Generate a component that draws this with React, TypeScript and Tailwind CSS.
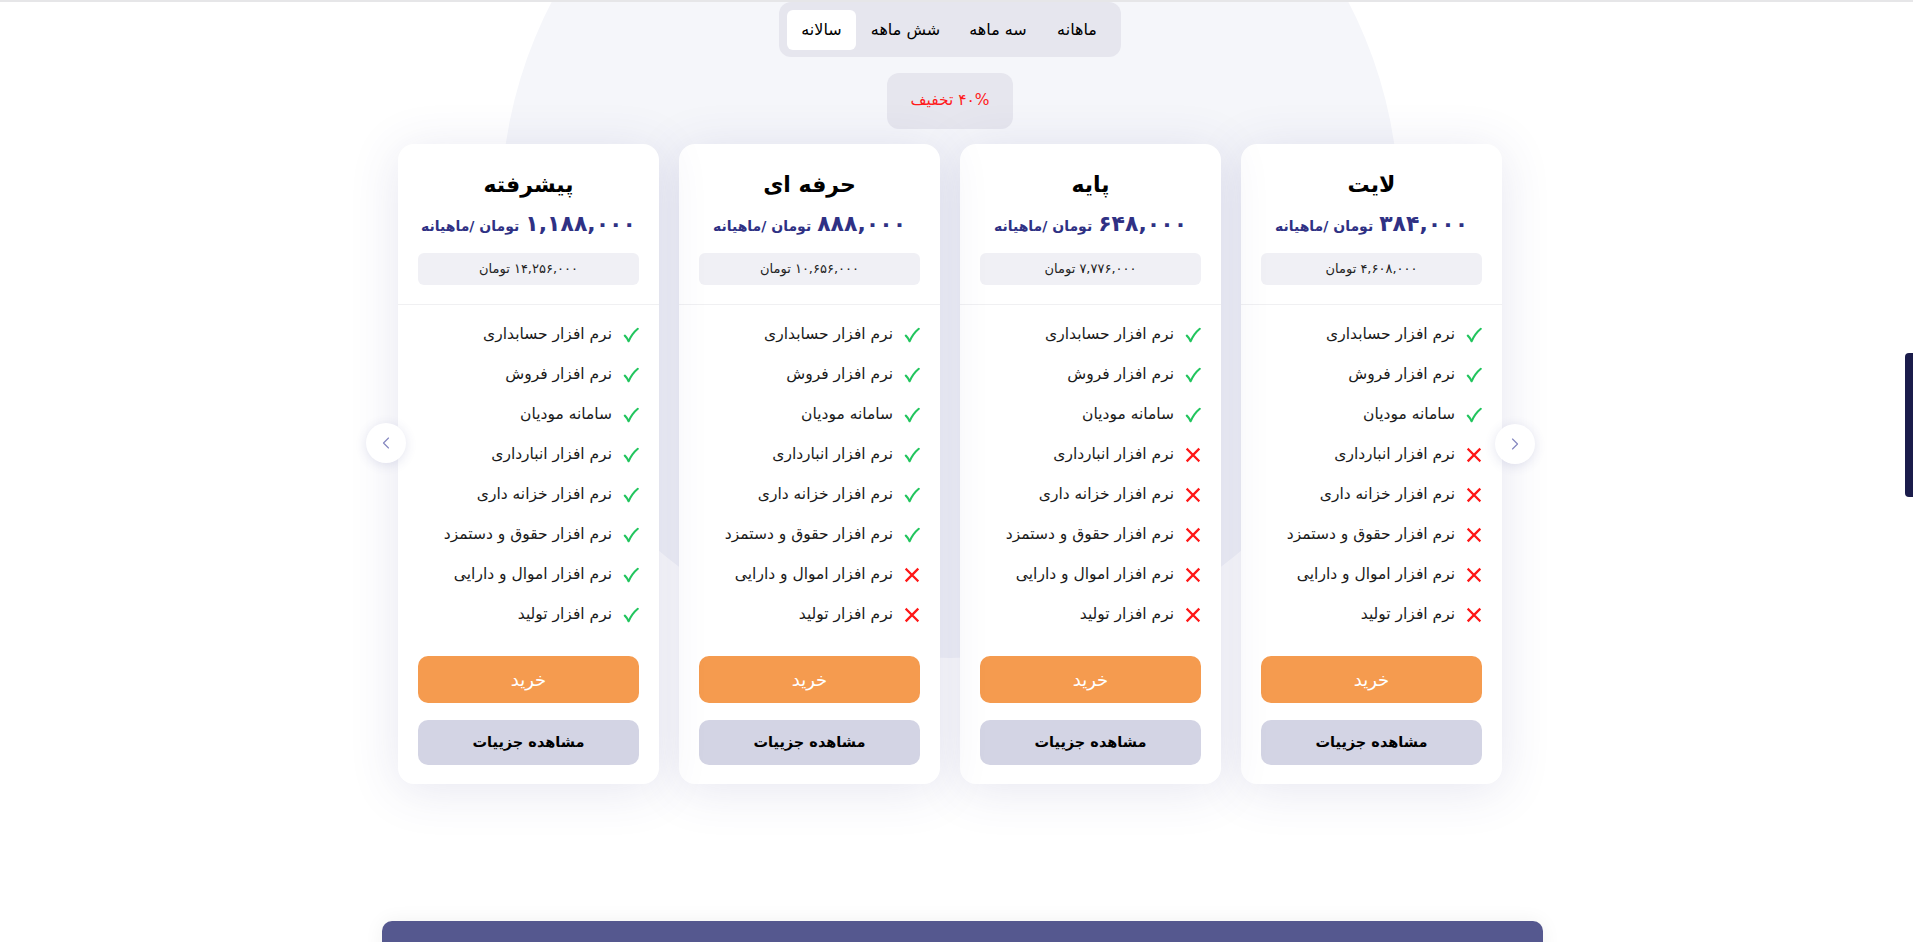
import { ChevronLeft, ChevronRight } from "lucide-react";

type Plan = {
  title: string;
  price: string;
  yearly: string;
  included: number;
};

const features = [
  "نرم افزار حسابداری",
  "نرم افزار فروش",
  "سامانه مودیان",
  "نرم افزار انبارداری",
  "نرم افزار خزانه داری",
  "نرم افزار حقوق و دستمزد",
  "نرم افزار اموال و دارایی",
  "نرم افزار تولید",
];

// order is right to left (page is rtl)
const plans: Plan[] = [
  { title: "لایت", price: "۳۸۴,۰۰۰", yearly: "۴,۶۰۸,۰۰۰", included: 3 },
  { title: "پایه", price: "۶۴۸,۰۰۰", yearly: "۷,۷۷۶,۰۰۰", included: 3 },
  { title: "حرفه ای", price: "۸۸۸,۰۰۰", yearly: "۱۰,۶۵۶,۰۰۰", included: 6 },
  { title: "پیشرفته", price: "۱,۱۸۸,۰۰۰", yearly: "۱۴,۲۵۶,۰۰۰", included: 8 },
];

const tabs = [
  { label: "ماهانه", width: "w-[72px]" },
  { label: "سه ماهه", width: "w-[86px]" },
  { label: "شش ماهه", width: "w-[99px]" },
  { label: "سالانه", width: "w-[69px]" },
];

function CheckIcon() {
  return (
    <svg width="16" height="16" viewBox="0 0 16 16" className="shrink-0">
      <path
        d="M1.8 8.6 Q4 10.6 5.6 14.2 Q9.2 6.4 14.8 1.8"
        fill="none"
        stroke="#22c55e"
        strokeWidth="2.1"
        strokeLinecap="round"
        strokeLinejoin="round"
      />
    </svg>
  );
}

function CrossIcon() {
  return (
    <svg width="16" height="16" viewBox="0 0 16 16" className="shrink-0">
      <path
        d="M2.5 2.5 L13.5 13.5 M13.5 2.5 L2.5 13.5"
        fill="none"
        stroke="#ff1616"
        strokeWidth="2.3"
        strokeLinecap="square"
      />
    </svg>
  );
}

function PlanCard({ plan }: { plan: Plan }) {
  return (
    <article className="flex w-[261px] flex-col rounded-2xl bg-white pb-[19px] pt-[27px] shadow-[0_6px_50px_rgba(60,62,140,0.13)]">
      <h3 className="text-center text-[22px] font-bold leading-[28px] text-black">
        {plan.title}
      </h3>
      <p className="mt-[8px] flex items-baseline justify-center gap-[6px] text-[#2f3184]">
        <span className="text-[22px] font-bold leading-[34px] tracking-[-1px]">
          {plan.price}
        </span>
        <span className="text-[14px] font-bold">تومان /ماهیانه</span>
      </p>
      <div className="mx-5 mt-[12px] flex h-[32px] items-center justify-center rounded-md bg-[#f0f0f5] text-[13px] text-[#222]">
        {plan.yearly} تومان
      </div>
      <div className="mt-[19px] h-px bg-[#f0f0f2]" />
      <ul className="mt-[10px] flex flex-col px-5">
        {features.map((f, i) => (
          <li key={f} className="flex h-[40px] items-center gap-[11px]">
            {i < plan.included ? <CheckIcon /> : <CrossIcon />}
            <span className="text-[15.5px] text-[#1a1a1a]">{f}</span>
          </li>
        ))}
      </ul>
      <button className="mx-5 mt-[21px] h-[47px] rounded-[10px] bg-[#f59b4f] text-[18px] text-white">
        خرید
      </button>
      <button className="mx-5 mt-[17px] h-[45px] rounded-[10px] bg-[#d3d4e4] text-[14.5px] font-bold text-black">
        مشاهده جزییات
      </button>
    </article>
  );
}

export default function App() {
  return (
    <div
      dir="rtl"
      className="relative h-[942px] w-full overflow-hidden bg-white font-['DejaVu_Sans',sans-serif]"
    >
      {/* background circle */}
      <div className="absolute left-[501px] top-[-240px] h-[898px] w-[898px] rounded-full bg-[#f5f6fa]" />

      <div className="relative h-[2px] w-full bg-[#e6e6e8]" />

      <div className="relative flex w-full flex-col items-center pr-[13px]">
        <div className="flex h-[55px] items-start rounded-xl bg-[#e6e6ee] p-2">
          {tabs.map((t) => (
            <button
              key={t.label}
              className={[
                "flex h-[40px] items-center justify-center rounded-md text-[16px] text-black",
                t.width,
                t.label === "سالانه" ? "bg-white" : "",
              ].join(" ")}
            >
              {t.label}
            </button>
          ))}
        </div>

        <div className="mt-4 flex h-[56px] w-[126px] items-center justify-center rounded-xl bg-[#e6e6ee] text-[15.5px] text-[#ff1a1a]">
          ۴۰% تخفیف
        </div>

        <div className="relative mt-[15px]">
          <div className="flex gap-5">
            {plans.map((p) => (
              <PlanCard key={p.title} plan={p} />
            ))}
          </div>
          <button className="absolute right-[-33px] top-[280px] flex h-10 w-10 items-center justify-center rounded-full bg-white shadow-[0_2px_12px_rgba(60,62,140,0.14)]">
            <ChevronRight size={20} strokeWidth={1.4} color="#8587c0" />
          </button>
          <button className="absolute left-[-32px] top-[279px] flex h-10 w-10 items-center justify-center rounded-full bg-white shadow-[0_2px_12px_rgba(60,62,140,0.14)]">
            <ChevronLeft size={20} strokeWidth={1.4} color="#8587c0" />
          </button>
        </div>
      </div>

      <div className="relative mt-[137px] flex w-full justify-center pl-[11px]">
        <div className="h-[60px] w-[1161px] rounded-t-[10px] bg-[#55588f] shadow-[0_0_20px_rgba(0,0,0,0.06)]" />
      </div>

      <div className="absolute right-0 top-[353px] h-[144px] w-[8px] rounded-l-[4px] bg-[#1b1c4b]" />
    </div>
  );
}
